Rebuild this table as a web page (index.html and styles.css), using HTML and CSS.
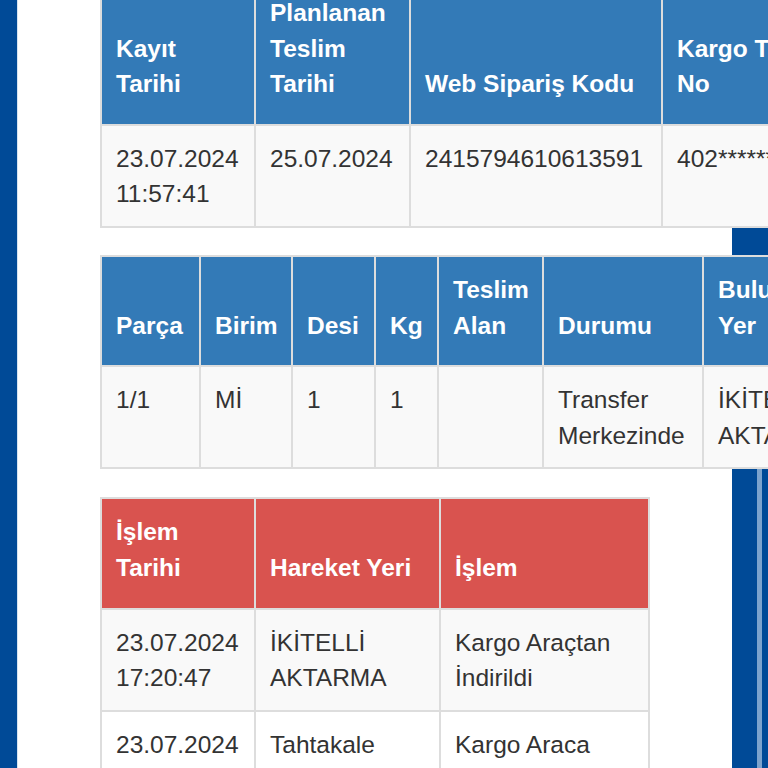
FILE: index.html
```html
<!DOCTYPE html>
<html lang="tr">
<head>
<meta charset="utf-8">
<title>Kargo Takip</title>
<link rel="stylesheet" href="styles.css">
</head>
<body>
<div class="page">
  <div class="side-left"></div>
  <main class="content">
    <table class="grid info">
      <colgroup><col class="w154"><col class="w155"><col class="w252"><col class="w200"></colgroup>
      <thead>
        <tr><th>Kayıt Tarihi</th><th>Planlanan Teslim Tarihi</th><th>Web Sipariş Kodu</th><th>Kargo Takip No</th></tr>
      </thead>
      <tbody>
        <tr><td>23.07.2024 11:57:41</td><td>25.07.2024</td><td>2415794610613591</td><td>402**********</td></tr>
      </tbody>
    </table>

    <table class="grid pieces">
      <colgroup><col class="w99"><col class="w92"><col class="w83"><col class="w63"><col class="w105"><col class="w160"><col class="w180"></colgroup>
      <thead>
        <tr><th>Parça</th><th>Birim</th><th>Desi</th><th>Kg</th><th>Teslim Alan</th><th>Durumu</th><th>Bulunduğu Yer</th></tr>
      </thead>
      <tbody>
        <tr><td>1/1</td><td>Mİ</td><td>1</td><td>1</td><td></td><td>Transfer Merkezinde</td><td>İKİTELLİ AKTARMA</td></tr>
      </tbody>
    </table>

    <table class="grid moves">
      <colgroup><col class="w154"><col class="w185"><col class="w209"></colgroup>
      <thead>
        <tr><th>İşlem Tarihi</th><th>Hareket Yeri</th><th>İşlem</th></tr>
      </thead>
      <tbody>
        <tr><td>23.07.2024 17:20:47</td><td>İKİTELLİ AKTARMA</td><td>Kargo Araçtan İndirildi</td></tr>
        <tr><td>23.07.2024 15:02:11</td><td>Tahtakale</td><td>Kargo Araca Yüklendi</td></tr>
      </tbody>
    </table>
  </main>
  <div class="side-right"><div class="stripe"></div></div>
</div>
</body>
</html>
```
FILE: styles.css
```css
html, body {
  margin: 0;
  padding: 0;
  background: #fff;
}
body {
  font-family: "Liberation Sans", Arial, Helvetica, sans-serif;
  font-size: 24.5px;
  line-height: 35.6px;
  color: #333;
}
.page {
  display: flex;
  height: 768px;
  overflow: hidden;
}
.side-left {
  flex: none;
  width: 17px;
  background: #004a97;
  border-right: 1px solid #d6e4f2;
}
.content {
  flex: 1;
  min-width: 0;
  padding-left: 82px;
  margin-top: -22px;
}
.side-right {
  flex: none;
  width: 36px;
  background: #004a97;
  display: flex;
}
.stripe {
  width: 5px;
  margin-left: 25px;
  margin-top: 280px;
  background: #7ca3cd;
}
.grid {
  position: relative;
  z-index: 1;
  border-collapse: collapse;
  table-layout: fixed;
  background: #fff;
  margin-bottom: 27px;
}
.grid.pieces {
  margin-bottom: 28px;
}
.grid th,
.grid td {
  border: 2px solid #ddd;
  text-align: left;
  vertical-align: top;
}
.grid th {
  padding: 15px 14px 22px;
  font-weight: bold;
  color: #fff;
  vertical-align: bottom;
}
.grid td {
  padding: 15px 14px 14px;
}
.grid tbody tr:nth-child(odd) td {
  background: #f9f9f9;
}
.info th, .pieces th {
  background: #337ab7;
}
.moves th {
  background: #d9534f;
}
.info { width: 761px; }
.pieces { width: 782px; }
.moves { width: 548px; }
.w63 { width: 63px; }
.w83 { width: 83px; }
.w92 { width: 92px; }
.w99 { width: 99px; }
.w105 { width: 105px; }
.w154 { width: 154px; }
.w155 { width: 155px; }
.w160 { width: 160px; }
.w180 { width: 180px; }
.w185 { width: 185px; }
.w200 { width: 200px; }
.w209 { width: 209px; }
.w252 { width: 252px; }
```
